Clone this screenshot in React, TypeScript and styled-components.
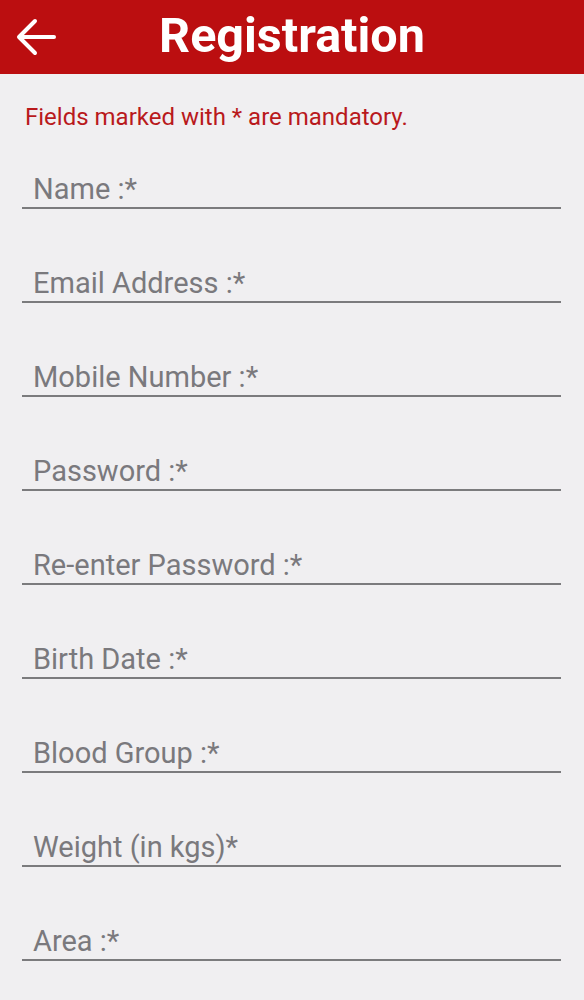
import React from 'react';
import styled, {createGlobalStyle} from 'styled-components';

/** Styles */
const GlobalStyle = createGlobalStyle`
    html, body {
        margin: 0;
        padding: 0;
        background: #f0eff1;
    }
    body {
        font-family: Roboto, "Liberation Sans", Arial, sans-serif;
    }
`;

const Page = styled('div')`
    width: 584px;
    min-height: 1000px;
    background: #f0eff1;
`;

const Header = styled('header')`
    position: relative;
    display: flex;
    align-items: center;
    justify-content: center;
    height: 74px;
    background-color: #bb0e10;
`;

const BackBtn = styled('button')`
    position: absolute;
    left: 14px;
    top: 16px;
    width: 44px;
    height: 42px;
    padding: 0;
    border: 0;
    background: none;
    display: block;
    cursor: pointer;
    svg {
        display: block;
    }
`;

const Title = styled('h1')`
    margin: 0;
    font-size: 48.5px;
    font-weight: 700;
    color: #fff;
    line-height: 1;
    transform: translateY(-1px);
`;

const Form = styled('form')`
    display: flex;
    flex-direction: column;
    padding: 28px 23px 0 22px;
`;

const Notice = styled('p')`
    margin: 0 0 0 3px;
    font-size: 24px;
    line-height: 30px;
    color: #b9191c;
`;

const Field = styled('label')`
    display: flex;
    align-items: flex-end;
    height: 94px;
    border-bottom: 2px solid #7b7b7d;
    box-sizing: border-box;
    &:first-of-type {
        height: 77px;
    }
`;

const FieldLabel = styled('span')`
    padding: 0 0 2px 11px;
    font-size: 29px;
    line-height: 32px;
    color: #7a797d;
`;

const fields = [
    'Name :*',
    'Email Address :*',
    'Mobile Number :*',
    'Password :*',
    'Re-enter Password :*',
    'Birth Date :*',
    'Blood Group :*',
    'Weight (in kgs)*',
    'Area :*',
];

const ArrowIcon = () => (
    <svg width="44" height="42" viewBox="0 0 44 42" fill="none" stroke="#fff" strokeWidth="4" strokeLinecap="round" strokeLinejoin="round">
        <path d="M6 21 H40"/>
        <path d="M21 5 L5 21 L21 37"/>
    </svg>
);

/**
 * Экран регистрации
 */
const App: React.FC = () => {
    return <Page>
        <GlobalStyle/>
        <Header>
            <BackBtn type="button" aria-label="Back"><ArrowIcon/></BackBtn>
            <Title>Registration</Title>
        </Header>
        <Form>
            <Notice>Fields marked with * are mandatory.</Notice>
            {fields.map((f, i) => <Field key={i}><FieldLabel>{f}</FieldLabel></Field>)}
        </Form>
    </Page>;
};

export default App;
